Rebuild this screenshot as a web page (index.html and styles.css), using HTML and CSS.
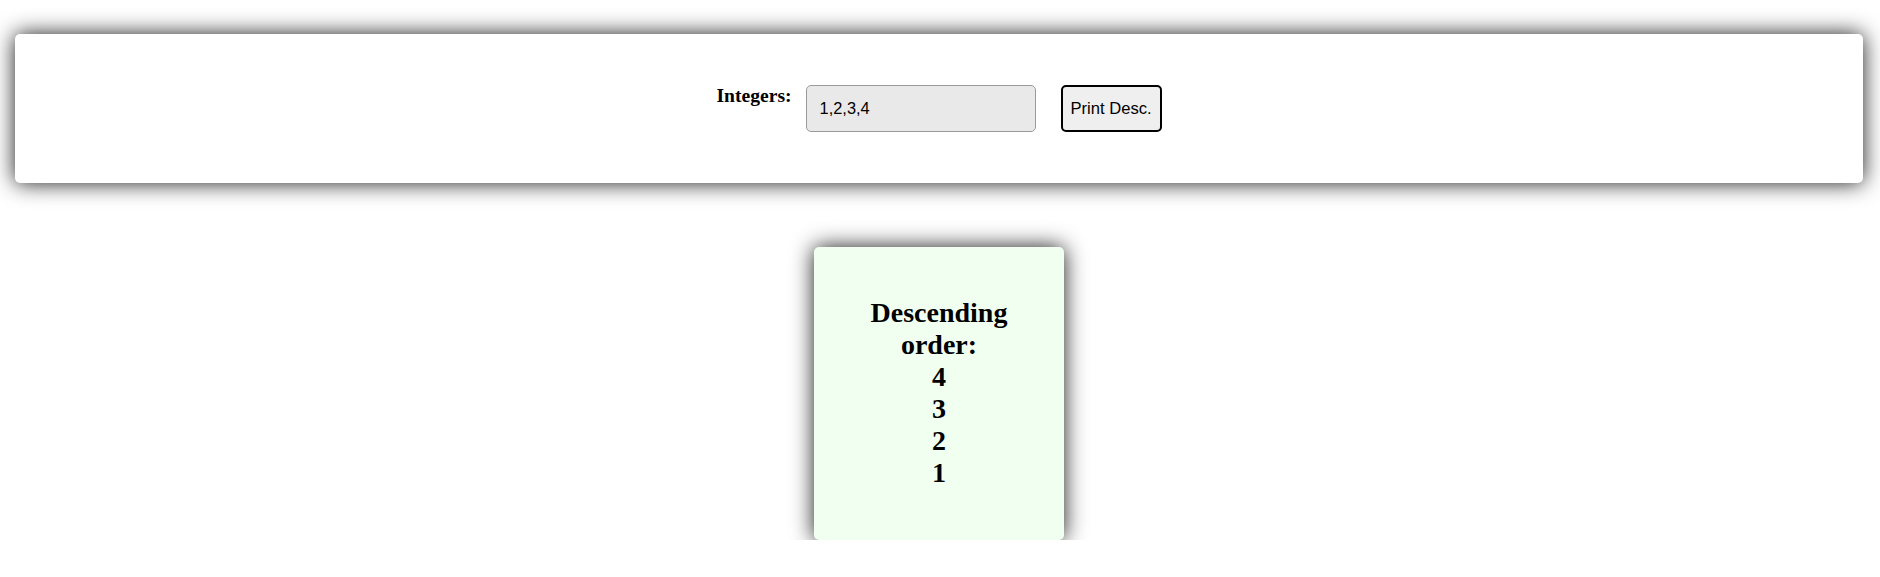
FILE: index.html
```html
<!DOCTYPE html>
<html>
<head>
<meta charset="utf-8">
<link rel="stylesheet" href="styles.css">
</head>
<body>
<div class="page">
  <div class="card">
    <form class="form">
      <label class="label">Integers:</label>
      <input class="input" type="text" value="1,2,3,4">
      <button class="btn" type="button">Print Desc.</button>
    </form>
  </div>
  <div class="result">
    <div class="result-text">Descending order:<br>4<br>3<br>2<br>1</div>
  </div>
</div>
</body>
</html>
```
FILE: styles.css
```css
html, body {
  margin: 0;
  padding: 0;
  background: #ffffff;
}
.page {
  padding: 34px 17px 0 15px;
  display: flex;
  flex-direction: column;
}
.card {
  background: #ffffff;
  border-radius: 5px;
  box-shadow: 0 0 22px rgba(0, 0, 0, 0.9);
  padding: 51px 0;
  display: flex;
  justify-content: center;
}
.form {
  display: flex;
  align-items: flex-start;
  margin: 0;
}
.label {
  font-family: "Liberation Serif", "Times New Roman", serif;
  font-weight: bold;
  font-size: 19.6px;
  line-height: 22px;
  color: #000;
  margin-right: 14px;
}
.input {
  box-sizing: border-box;
  width: 230px;
  height: 47px;
  padding: 0 13px;
  border: 1px solid #9a9a9a;
  border-radius: 5px;
  background: #e9e9e9;
  font-family: "Liberation Sans", Arial, sans-serif;
  font-size: 16.4px;
  color: #000;
  margin: 0 25px 0 0;
  outline: none;
}
.btn {
  box-sizing: border-box;
  width: 101px;
  height: 47px;
  padding: 0;
  border: 2px solid #000;
  border-radius: 5px;
  background: #efefef;
  font-family: "Liberation Sans", Arial, sans-serif;
  font-size: 16.6px;
  color: #000;
  margin: 0;
}
.result {
  box-sizing: border-box;
  align-self: center;
  width: 250px;
  margin-top: 64px;
  padding: 50px 30px 51px;
  background: #f0fff0;
  border-radius: 5px;
  box-shadow: 0 0 22px rgba(0, 0, 0, 0.9);
}
.result-text {
  font-family: "Liberation Serif", "Times New Roman", serif;
  font-weight: bold;
  font-size: 28px;
  text-align: center;
  color: #000;
}
```
